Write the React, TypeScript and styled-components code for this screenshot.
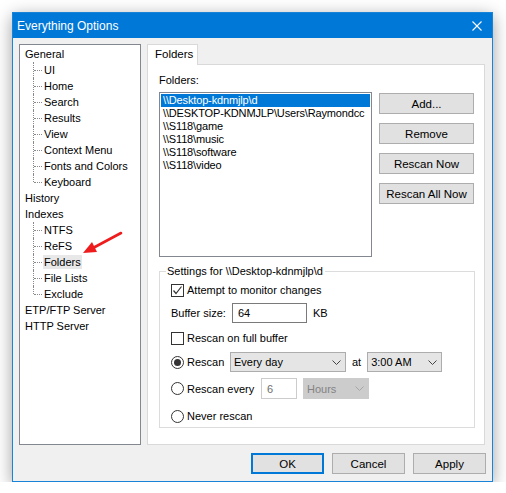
import React from "react";
import styled, { createGlobalStyle } from "styled-components";

const GlobalStyle = createGlobalStyle`
  html, body {
    margin: 0;
    background: #ffffff;
  }
  body {
    font-family: "Liberation Sans", Arial, sans-serif;
    font-size: 11px;
    color: #000000;
  }
  * {
    box-sizing: border-box;
  }
`;

const Page = styled.div`
  padding: 12px 0 0 12px;
`;

const Window = styled.div`
  width: 481px;
  height: 470px;
  border: 1px solid #1883d7;
  background: #f0f0f0;
  box-shadow: 0 4px 16px rgba(0, 0, 0, 0.38);
  display: flex;
  flex-direction: column;
`;

const TitleBar = styled.div`
  height: 25px;
  background: #0078d7;
  color: #ffffff;
  font-size: 12px;
  display: flex;
  align-items: center;
  justify-content: space-between;
  padding: 0 10px 0 4px;
`;

const Main = styled.div`
  display: flex;
  gap: 6px;
  padding: 6px 7px 0 6px;
  height: 407px;
`;

const Tree = styled.div`
  position: relative;
  width: 122px;
  height: 401px;
  background: #ffffff;
  border: 1px solid #828790;
  padding-top: 1px;
`;

const TreeRow = styled.div<{ $child?: boolean; $last?: boolean }>`
  position: relative;
  height: 16px;
  line-height: 16px;
  padding-left: ${(p) => (p.$child ? 23 : 4)}px;
  white-space: nowrap;
  ${(p) =>
    p.$child &&
    `
    &::before {
      content: "";
      position: absolute;
      left: 13px;
      top: 0;
      height: ${p.$last ? 8 : 16}px;
      border-left: 1px dotted #8a8a8a;
    }
    &::after {
      content: "";
      position: absolute;
      left: 14px;
      top: 8px;
      width: 8px;
      border-top: 1px dotted #8a8a8a;
    }
  `}
`;

const TreeLabel = styled.span<{ $selected?: boolean }>`
  padding: 1px 1px;
  background: ${(p) => (p.$selected ? "#e8e8e8" : "transparent")};
`;

const Arrow = styled.svg`
  position: absolute;
  left: 59px;
  top: 182px;
`;

const TabArea = styled.div`
  width: 338px;
  display: flex;
  flex-direction: column;
`;

const TabStrip = styled.div`
  display: flex;
  height: 20px;
`;

const Tab = styled.div`
  position: relative;
  z-index: 1;
  width: 51px;
  height: 21px;
  background: #ffffff;
  border: 1px solid #d9d9d9;
  border-bottom: none;
  padding-left: 7px;
  line-height: 19px;
  font-size: 11.5px;
`;

const TabPanel = styled.div`
  flex: 1;
  background: #ffffff;
  border: 1px solid #d9d9d9;
  padding: 9px 10px 0 11px;
  display: flex;
  flex-direction: column;
`;

const FieldLabel = styled.div`
  height: 13px;
  line-height: 13px;
  margin-bottom: 5px;
`;

const ListRow = styled.div`
  display: flex;
  gap: 7px;
`;

const ListBox = styled.div`
  width: 213px;
  height: 165px;
  border: 1px solid #828790;
  padding: 1px;
`;

const ListItem = styled.div<{ $selected?: boolean }>`
  height: 13px;
  line-height: 13px;
  padding-left: 2px;
  white-space: nowrap;
  letter-spacing: -0.15px;
  background: ${(p) => (p.$selected ? "#0078d7" : "transparent")};
  color: ${(p) => (p.$selected ? "#ffffff" : "#000000")};
`;

const ButtonColumn = styled.div`
  display: flex;
  flex-direction: column;
  gap: 9px;
  padding-top: 1px;
`;

const Button = styled.div<{ $w: number; $default?: boolean }>`
  width: ${(p) => p.$w}px;
  height: 21px;
  background: #e1e1e1;
  border: ${(p) => (p.$default ? "2px solid #0078d7" : "1px solid #adadad")};
  display: flex;
  align-items: center;
  justify-content: center;
  font-size: 11.5px;
`;

const GroupBox = styled.fieldset`
  margin: 7px 0 0 0;
  width: 316px;
  border: 1px solid #dcdcdc;
  padding: 4px 0 3px 11px;
  min-width: 0;
`;

const Legend = styled.legend`
  margin-left: -5px;
  padding: 0 2px 0 1px;
  line-height: 14px;
`;

const Row = styled.div<{ $h: number; $mt: number }>`
  display: flex;
  align-items: center;
  height: ${(p) => p.$h}px;
  margin-top: ${(p) => p.$mt}px;
`;

const Check = styled.span`
  width: 13px;
  height: 13px;
  border: 1px solid #333333;
  background: #ffffff;
  margin-right: 3px;
  display: flex;
  align-items: center;
  justify-content: center;
`;

const Radio = styled.span<{ $on?: boolean }>`
  width: 13px;
  height: 13px;
  border: 1px solid #333333;
  border-radius: 50%;
  background: #ffffff;
  margin-right: 3px;
  display: flex;
  align-items: center;
  justify-content: center;
  &::after {
    content: "";
    width: 7px;
    height: 7px;
    border-radius: 50%;
    background: ${(p) => (p.$on ? "#333333" : "transparent")};
  }
`;

const Label = styled.span<{ $w?: number }>`
  white-space: nowrap;
  ${(p) => (p.$w ? `width: ${p.$w}px;` : "")}
`;

const Input = styled.div<{ $w: number; $h: number; $disabled?: boolean }>`
  width: ${(p) => p.$w}px;
  height: ${(p) => p.$h}px;
  border: 1px solid ${(p) => (p.$disabled ? "#cccccc" : "#7a7a7a")};
  background: #ffffff;
  color: ${(p) => (p.$disabled ? "#6d6d6d" : "#000000")};
  padding-left: 5px;
  display: flex;
  align-items: center;
`;

const Select = styled.div<{ $w: number; $h: number; $disabled?: boolean }>`
  width: ${(p) => p.$w}px;
  height: ${(p) => p.$h}px;
  border: 1px solid ${(p) => (p.$disabled ? "#cccccc" : "#adadad")};
  background: ${(p) => (p.$disabled ? "#cccccc" : "#e5e5e5")};
  color: ${(p) => (p.$disabled ? "#838383" : "#000000")};
  padding: 0 4px 0 3px;
  display: flex;
  align-items: center;
  justify-content: space-between;
  margin-left: ${(p) => (p.$disabled ? 6 : 0)}px;
`;

const Unit = styled.span<{ $gap: number }>`
  margin: 0 ${(p) => p.$gap}px;
`;

const Footer = styled.div`
  display: flex;
  justify-content: flex-end;
  gap: 8px;
  margin-top: 8px;
  padding-right: 6px;
`;

const Chevron = ({ color }: { color: string }) => (
  <svg width="9" height="5" viewBox="0 0 9 5">
    <polyline points="0.5,0.5 4.5,4.5 8.5,0.5" fill="none" stroke={color} strokeWidth="1" />
  </svg>
);

const tree: { label: string; child?: boolean; last?: boolean; selected?: boolean }[] = [
  { label: "General" },
  { label: "UI", child: true },
  { label: "Home", child: true },
  { label: "Search", child: true },
  { label: "Results", child: true },
  { label: "View", child: true },
  { label: "Context Menu", child: true },
  { label: "Fonts and Colors", child: true },
  { label: "Keyboard", child: true, last: true },
  { label: "History" },
  { label: "Indexes" },
  { label: "NTFS", child: true },
  { label: "ReFS", child: true },
  { label: "Folders", child: true, selected: true },
  { label: "File Lists", child: true },
  { label: "Exclude", child: true, last: true },
  { label: "ETP/FTP Server" },
  { label: "HTTP Server" },
];

const folders = [
  "\\\\Desktop-kdnmjlp\\d",
  "\\\\DESKTOP-KDNMJLP\\Users\\Raymondcc",
  "\\\\S118\\game",
  "\\\\S118\\music",
  "\\\\S118\\software",
  "\\\\S118\\video",
];

export default function App() {
  return (
    <Page>
      <GlobalStyle />
      <Window>
        <TitleBar>
          <span>Everything Options</span>
          <svg width="10" height="10" viewBox="0 0 10 10">
            <path d="M0.5 0.5 L9.5 9.5 M9.5 0.5 L0.5 9.5" stroke="#ffffff" strokeWidth="1.1" />
          </svg>
        </TitleBar>
        <Main>
          <Tree>
            {tree.map((t) => (
              <TreeRow key={t.label} $child={t.child} $last={t.last}>
                <TreeLabel $selected={t.selected}>{t.label}</TreeLabel>
              </TreeRow>
            ))}
            <Arrow width="46" height="32" viewBox="0 0 46 32">
              <line x1="42" y1="6" x2="14" y2="21" stroke="#ee1c1c" strokeWidth="2.6" strokeLinecap="round" />
              <polygon points="4,26 13,15 18,25" fill="#ee1c1c" />
            </Arrow>
          </Tree>
          <TabArea>
            <TabStrip>
              <Tab>Folders</Tab>
            </TabStrip>
            <TabPanel>
              <FieldLabel>Folders:</FieldLabel>
              <ListRow>
                <ListBox>
                  {folders.map((f, i) => (
                    <ListItem key={f} $selected={i === 0}>
                      {f}
                    </ListItem>
                  ))}
                </ListBox>
                <ButtonColumn>
                  <Button $w={95}>Add...</Button>
                  <Button $w={95}>Remove</Button>
                  <Button $w={95}>Rescan Now</Button>
                  <Button $w={95}>Rescan All Now</Button>
                </ButtonColumn>
              </ListRow>
              <GroupBox>
                <Legend>Settings for \\Desktop-kdnmjlp\d</Legend>
                <Row $h={16} $mt={0}>
                  <Check>
                    <svg width="11" height="11" viewBox="0 0 11 11">
                      <polyline points="1.5,5.5 4,8.5 9.5,1.5" fill="none" stroke="#333333" strokeWidth="1.2" />
                    </svg>
                  </Check>
                  <Label>Attempt to monitor changes</Label>
                </Row>
                <Row $h={20} $mt={5}>
                  <Label $w={61}>Buffer size:</Label>
                  <Input $w={75} $h={20}>64</Input>
                  <Unit $gap={6}>KB</Unit>
                </Row>
                <Row $h={16} $mt={7}>
                  <Check />
                  <Label>Rescan on full buffer</Label>
                </Row>
                <Row $h={20} $mt={6}>
                  <Radio $on />
                  <Label $w={43}>Rescan</Label>
                  <Select $w={116} $h={20}>
                    <span>Every day</span>
                    <Chevron color="#444444" />
                  </Select>
                  <Unit $gap={6}>at</Unit>
                  <Select $w={75} $h={20}>
                    <span>3:00 AM</span>
                    <Chevron color="#444444" />
                  </Select>
                </Row>
                <Row $h={21} $mt={6}>
                  <Radio />
                  <Label $w={74}>Rescan every</Label>
                  <Input $w={36} $h={21} $disabled>
                    6
                  </Input>
                  <Select $w={66} $h={21} $disabled>
                    <span>Hours</span>
                    <Chevron color="#a6a6a6" />
                  </Select>
                </Row>
                <Row $h={16} $mt={9}>
                  <Radio />
                  <Label>Never rescan</Label>
                </Row>
              </GroupBox>
            </TabPanel>
          </TabArea>
        </Main>
        <Footer>
          <Button $w={73} $default>
            OK
          </Button>
          <Button $w={73}>Cancel</Button>
          <Button $w={73}>Apply</Button>
        </Footer>
      </Window>
    </Page>
  );
}
